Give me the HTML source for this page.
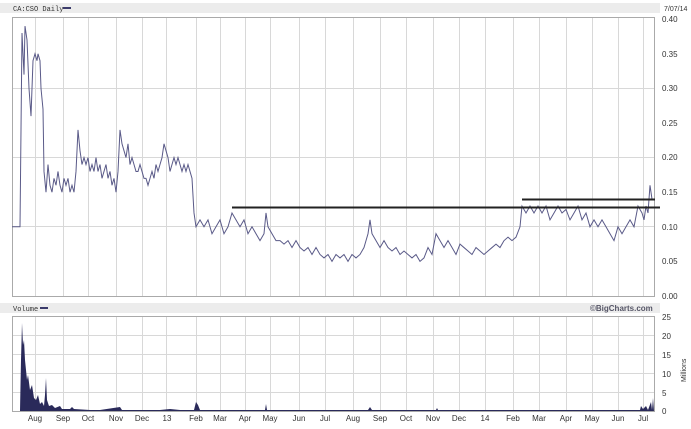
<!DOCTYPE html>
<html><head><style>
body{margin:0;background:#fff;font-family:"Liberation Mono",monospace;}
svg text{font-family:"Liberation Sans",sans-serif;font-size:8px;fill:#333}
</style></head><body>
<svg width="691" height="424" xmlns="http://www.w3.org/2000/svg">
<rect x="0" y="3" width="660" height="10" fill="#ececec"/>
<text x="13" y="11" style="font-family:'Liberation Mono';font-size:7px">CA:CSO Daily</text>
<rect x="63" y="7" width="8" height="2" fill="#3b3b6b"/>
<text x="664" y="11" style="font-size:7px">7/07/14</text>
<g stroke="#d8d8d8" stroke-width="1">
<line x1="12" y1="157.5" x2="655" y2="157.5"/><line x1="12" y1="226.5" x2="655" y2="226.5"/>
<line x1="12" y1="88.5" x2="655" y2="88.5"/>
<g id="vg">
<line x1="35.5" y1="17" x2="35.5" y2="296"/><line x1="63.5" y1="17" x2="63.5" y2="296"/><line x1="88.5" y1="17" x2="88.5" y2="296"/><line x1="116.5" y1="17" x2="116.5" y2="296"/><line x1="142.5" y1="17" x2="142.5" y2="296"/><line x1="166.5" y1="17" x2="166.5" y2="296"/><line x1="196.5" y1="17" x2="196.5" y2="296"/><line x1="220.5" y1="17" x2="220.5" y2="296"/><line x1="245.5" y1="17" x2="245.5" y2="296"/><line x1="270.5" y1="17" x2="270.5" y2="296"/><line x1="299.5" y1="17" x2="299.5" y2="296"/><line x1="325.5" y1="17" x2="325.5" y2="296"/><line x1="353.5" y1="17" x2="353.5" y2="296"/><line x1="380.5" y1="17" x2="380.5" y2="296"/><line x1="406.5" y1="17" x2="406.5" y2="296"/><line x1="433.5" y1="17" x2="433.5" y2="296"/><line x1="459.5" y1="17" x2="459.5" y2="296"/><line x1="485.5" y1="17" x2="485.5" y2="296"/><line x1="513.5" y1="17" x2="513.5" y2="296"/><line x1="539.5" y1="17" x2="539.5" y2="296"/><line x1="566.5" y1="17" x2="566.5" y2="296"/><line x1="592.5" y1="17" x2="592.5" y2="296"/><line x1="618.5" y1="17" x2="618.5" y2="296"/><line x1="643.5" y1="17" x2="643.5" y2="296"/>
</g>
<use href="#vg" transform="translate(0,316) scale(1,0.34) translate(0,-17)"/>
<line x1="12" y1="335.5" x2="655" y2="335.5"/><line x1="12" y1="354.5" x2="655" y2="354.5"/><line x1="12" y1="373.5" x2="655" y2="373.5"/><line x1="12" y1="392.5" x2="655" y2="392.5"/>
</g>
<rect x="12.5" y="17.5" width="642" height="279" fill="none" stroke="#aaa"/>
<rect x="12.5" y="316.5" width="642" height="95" fill="none" stroke="#aaa"/>
<g style="font-size:7.5px">
<text x="662" y="22">0.40</text><text x="662" y="57">0.35</text><text x="662" y="91">0.30</text><text x="662" y="126">0.25</text><text x="662" y="160">0.20</text><text x="662" y="195">0.15</text><text x="662" y="230">0.10</text><text x="662" y="264">0.05</text><text x="662" y="299">0.00</text>
<text x="662" y="320">25</text><text x="662" y="339">20</text><text x="662" y="358">15</text><text x="662" y="377">10</text><text x="662" y="396">5</text><text x="662" y="414">0</text>
</g>
<text transform="translate(686,382) rotate(-90)" style="font-size:7px">Millions</text>
<rect x="0" y="303" width="660" height="10" fill="#ececec"/>
<text x="13" y="311" style="font-family:'Liberation Mono';font-size:7px">Volume</text>
<rect x="40" y="307" width="8" height="2" fill="#3b3b6b"/>
<text x="590" y="311" style="font-size:8px;font-weight:bold;fill:#556">©BigCharts.com</text>
<g style="font-size:7.5px" text-anchor="middle">
<text x="35" y="421">Aug</text><text x="63" y="421">Sep</text><text x="88" y="421">Oct</text><text x="116" y="421">Nov</text><text x="142" y="421">Dec</text><text x="167" y="421">13</text><text x="196" y="421">Feb</text><text x="220" y="421">Mar</text><text x="245" y="421">Apr</text><text x="270" y="421">May</text><text x="299" y="421">Jun</text><text x="325" y="421">Jul</text><text x="353" y="421">Aug</text><text x="380" y="421">Sep</text><text x="406" y="421">Oct</text><text x="433" y="421">Nov</text><text x="459" y="421">Dec</text><text x="485" y="421">14</text><text x="513" y="421">Feb</text><text x="539" y="421">Mar</text><text x="566" y="421">Apr</text><text x="592" y="421">May</text><text x="618" y="421">Jun</text><text x="643" y="421">Jul</text>
</g>
<g transform="translate(0,296) scale(1,-692)">
<polyline fill="none" stroke="#5a5a88" stroke-width="1" vector-effect="non-scaling-stroke" points="12,0.1 16,0.1 20,0.1 22,0.38 24,0.32 25,0.39 27,0.37 29,0.3 31,0.26 33,0.34 35,0.35 37,0.34 38,0.35 40,0.34 41,0.3 43,0.27 44,0.18 46,0.15 48,0.19 50,0.16 52,0.15 54,0.17 56,0.16 58,0.18 60,0.16 62,0.15 64,0.17 66,0.16 68,0.17 70,0.15 72,0.16 74,0.15 76,0.18 78,0.24 80,0.21 82,0.19 84,0.2 86,0.19 88,0.2 90,0.18 92,0.19 94,0.18 96,0.2 98,0.18 100,0.19 102,0.17 104,0.18 106,0.19 108,0.17 110,0.18 112,0.16 114,0.17 116,0.15 118,0.18 120,0.24 122,0.22 124,0.21 126,0.2 128,0.22 130,0.19 132,0.2 134,0.19 136,0.18 138,0.18 140,0.19 142,0.18 144,0.17 146,0.17 148,0.16 150,0.17 152,0.18 154,0.17 156,0.19 158,0.18 160,0.19 162,0.2 164,0.22 166,0.21 168,0.2 170,0.18 172,0.19 174,0.2 176,0.19 178,0.2 180,0.19 182,0.18 184,0.19 186,0.18 188,0.19 190,0.18 192,0.17 194,0.12 196,0.1 200,0.11 204,0.1 208,0.11 212,0.09 216,0.1 220,0.11 224,0.09 228,0.1 232,0.12 236,0.11 240,0.1 244,0.11 248,0.09 252,0.1 256,0.09 260,0.08 264,0.09 266,0.12 268,0.1 272,0.09 276,0.08 280,0.08 284,0.075 288,0.08 292,0.07 296,0.08 300,0.07 304,0.065 308,0.07 312,0.06 316,0.07 320,0.06 324,0.055 328,0.06 332,0.05 336,0.06 340,0.055 344,0.06 348,0.05 352,0.06 356,0.055 360,0.06 364,0.07 368,0.09 370,0.11 372,0.09 376,0.08 380,0.07 384,0.08 388,0.07 392,0.065 396,0.07 400,0.06 404,0.065 408,0.06 412,0.055 416,0.06 420,0.05 424,0.055 428,0.07 432,0.06 436,0.09 440,0.08 444,0.07 448,0.08 452,0.07 456,0.06 460,0.075 464,0.07 468,0.065 472,0.06 476,0.07 480,0.065 484,0.06 488,0.065 492,0.07 496,0.075 500,0.07 504,0.08 508,0.085 512,0.08 516,0.085 520,0.1 522,0.13 526,0.12 530,0.13 534,0.12 538,0.13 542,0.12 546,0.13 550,0.11 554,0.12 558,0.13 562,0.12 566,0.125 570,0.11 574,0.12 578,0.13 582,0.11 586,0.12 590,0.1 594,0.11 598,0.1 602,0.11 606,0.1 610,0.09 614,0.08 618,0.1 622,0.09 626,0.1 630,0.11 634,0.1 638,0.13 642,0.12 644,0.11 646,0.13 648,0.12 650,0.16 652,0.14"/>
</g>
<line x1="232" y1="207.5" x2="660" y2="207.5" stroke="#222" stroke-width="2"/>
<line x1="522" y1="199.5" x2="655" y2="199.5" stroke="#222" stroke-width="2"/>
<path fill="#2a2a5a" d="M20,411 L21,360 L22,323 L23,345 L24,340 L25,360 L26,370 L27,380 L28,375 L30,390 L32,385 L34,398 L36,400 L38,395 L40,404 L42,402 L44,406 L45,395 L46,378 L47,400 L49,406 L52,405 L55,408 L60,406 L62,409 L70,409 L72,407 L74,409 L90,410 L100,410 L120,407 L122,410 L140,410 L160,410 L170,409 L180,410 L194,410 L196,402 L198,405 L200,410 L265,410 L266,404 L267,410 L368,410 L370,407 L372,410 L436,410 L437,408 L438,410 L640,410 L641,406 L643,409 L646,406 L648,410 L651,402 L652,410 L653,398 L654,411 Z"/>
</svg>
</body></html>
